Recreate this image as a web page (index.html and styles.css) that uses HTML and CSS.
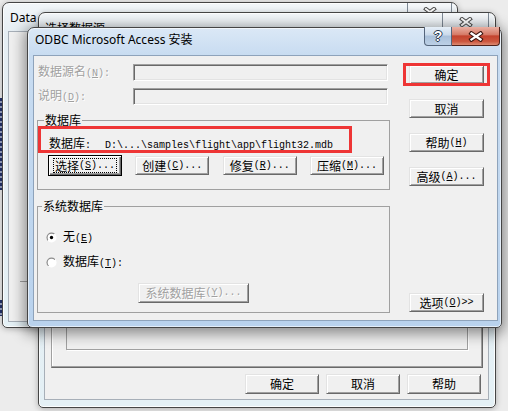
FILE: index.html
```html
<!DOCTYPE html>
<html lang="zh-CN">
<head>
<meta charset="utf-8">
<title>ODBC Microsoft Access 安装</title>
<link rel="stylesheet" href="styles.css">
</head>
<body>
<div class="desktop">
  <div class="strip s1"></div>
  <div class="strip s2"></div>

  <section class="win inactive w1">
    <header class="tb">
      <span class="ttl">Data Connection Wizard</span>
      <div class="caps">
        <span class="cap close"><svg width="14" height="10" viewBox="0 0 14 10"><path d="M3 2 L11 8 M11 2 L3 8" stroke="#4a4a4a" stroke-width="4" stroke-linecap="square"/><path d="M3 2 L11 8 M11 2 L3 8" stroke="#fff" stroke-width="2" stroke-linecap="square"/></svg></span>
      </div>
    </header>
    <div class="client c1"><div class="sep"></div></div>
  </section>

  <section class="win inactive w2">
    <header class="tb">
      <span class="ttl cjk">选择数据源</span>
      <div class="caps">
        <span class="cap close"><svg width="14" height="10" viewBox="0 0 14 10"><path d="M3 2 L11 8 M11 2 L3 8" stroke="#4a4a4a" stroke-width="4" stroke-linecap="square"/><path d="M3 2 L11 8 M11 2 L3 8" stroke="#fff" stroke-width="2" stroke-linecap="square"/></svg></span>
      </div>
    </header>
    <div class="client c2">
      <div class="panel"><div class="well"></div></div>
      <div class="btnrow">
        <button class="btn b2">确定</button>
        <button class="btn b2">取消</button>
        <button class="btn b2">帮助</button>
      </div>
    </div>
  </section>

  <section class="win active w3">
    <header class="tb">
      <span class="ttl">ODBC Microsoft Access 安装</span>
      <div class="caps">
        <span class="cap help"><span class="q">?</span></span>
        <span class="cap red"><svg width="18" height="11" viewBox="0 0 18 11"><path d="M4.5 2.5 L13.5 8.5 M13.5 2.5 L4.5 8.5" stroke="#3b1610" stroke-width="4.4" stroke-linecap="square"/><path d="M4.5 2.5 L13.5 8.5 M13.5 2.5 L4.5 8.5" stroke="#fff" stroke-width="2.3" stroke-linecap="square"/></svg></span>
      </div>
    </header>
    <div class="client c3">
      <div class="main">
        <div class="row">
          <label class="lbl dis">数据源名<span class="m">(<u>N</u>):</span></label>
          <span class="field"></span>
        </div>
        <div class="row r2">
          <label class="lbl dis">说明<span class="m">(<u>D</u>):</span></label>
          <span class="field"></span>
        </div>
        <fieldset class="grp g1">
          <legend>数据库</legend>
          <div class="dbline">数据库<span class="m">:</span><span class="m path">D:\...\samples\flight\app\flight32.mdb</span></div>
          <div class="dbbtns">
            <button class="btn def"><span class="focus">选择<span class="m">(<u>S</u>)...</span></span></button>
            <button class="btn b4">创建<span class="m">(<u>C</u>)...</span></button>
            <button class="btn b4">修复<span class="m">(<u>R</u>)...</span></button>
            <button class="btn b4">压缩<span class="m">(<u>M</u>)...</span></button>
          </div>
        </fieldset>
        <fieldset class="grp g2">
          <legend>系统数据库</legend>
          <div class="radio">
            <svg width="12" height="12" viewBox="0 0 12 12"><defs><linearGradient id="rg" x1="0" y1="0" x2="1" y2="1"><stop offset="0.5" stop-color="#8a8a8a"/><stop offset="0.5" stop-color="#ffffff"/></linearGradient></defs><circle cx="6" cy="6" r="5.5" fill="url(#rg)"/><circle cx="6" cy="6" r="4.2" fill="#fff"/><circle cx="6" cy="6" r="1.8" fill="#000"/></svg>
            <span>无<span class="m">(<u>E</u>)</span></span>
          </div>
          <div class="radio r2">
            <svg width="12" height="12" viewBox="0 0 12 12"><circle cx="6" cy="6" r="5.5" fill="url(#rg)"/><circle cx="6" cy="6" r="4.2" fill="#fff"/></svg>
            <span>数据库<span class="m">(<u>T</u>):</span></span>
          </div>
          <button class="btn sysbtn dis">系统数据库<span class="m">(<u>Y</u>)...</span></button>
        </fieldset>
      </div>
      <div class="side">
        <button class="btn">确定</button>
        <button class="btn">取消</button>
        <button class="btn">帮助<span class="m">(<u>H</u>)</span></button>
        <button class="btn">高级<span class="m">(<u>A</u>)...</span></button>
        <button class="btn opt">选项<span class="m">(<u>O</u>)&gt;&gt;</span></button>
      </div>
      <div class="hl hl1"></div>
      <div class="hl hl2"></div>
    </div>
  </section>
</div>
</body>
</html>
```

FILE: styles.css
```css
* { box-sizing: border-box; margin: 0; padding: 0; }
html, body { width: 508px; height: 411px; overflow: hidden; }
body {
  background: #ececec;
  font-family: "Noto Sans CJK SC", "Noto Sans", sans-serif;
  font-size: 12px;
  line-height: 14px;
  color: #000;
}
.desktop { position: relative; width: 508px; height: 411px; overflow: hidden; }
.m { font-family: "Liberation Mono", "DejaVu Sans Mono", monospace; font-size: 10px; }
u { text-decoration: underline; }

.strip { position: absolute; left: 0; width: 2px; background: repeating-linear-gradient(#24336b 0 3px, #9aa5c4 3px 5px); }
.s1 { top: 98px; height: 92px; }
.s2 { top: 300px; height: 16px; }

/* windows */
.win {
  position: absolute;
  display: flex;
  flex-direction: column;
  border: 1px solid #454545;
  border-radius: 7px 7px 5px 5px;
}
.inactive {
  background: linear-gradient(#f2f6f9, #e6eef3 30px, #e4f0f5);
  box-shadow: 0 1px 6px rgba(0, 0, 0, 0.28), inset 0 0 0 1px rgba(255, 255, 255, 0.85);
}
.w1 { left: 2px; top: 2px; width: 456px; height: 326px; padding: 0 5px 5px 5px; }
.w2 { left: 38px; top: 12px; width: 458px; height: 396px; padding: 0 6px 7px 5px; }
.w3 {
  left: 27px; top: 27px; width: 475px; height: 301px;
  padding: 0 3px 6px 5px;
  background: linear-gradient(#dbe8f6, #c8dcf1 27px, #b9d2ed);
  box-shadow: 0 3px 14px 3px rgba(0, 0, 0, 0.42), inset 0 0 0 1px rgba(255, 255, 255, 0.6);
}

.tb { display: flex; align-items: flex-start; flex: none; }
.w1 .tb, .w2 .tb { height: 28px; }
.w3 .tb { height: 27px; }
.ttl {
  flex: 1;
  font-family: "Noto Sans", "Noto Sans CJK SC", sans-serif;
  font-size: 12px;
  line-height: 14px;
  white-space: nowrap;
  overflow: hidden;
}
.ttl.cjk { font-family: "Noto Sans CJK SC", sans-serif; }
.w1 .ttl { padding: 8px 0 0 2px; }
.w2 .ttl { padding: 8px 0 0 1px; }
.w3 .ttl { padding: 5px 0 0 2px; }

.caps { display: flex; flex: none; }
.cap {
  display: flex; align-items: center; justify-content: center;
  height: 19px;
  border: 1px solid #7d8894;
  border-top: none;
}
.close { background: linear-gradient(#f6f8fa, #e2e8ee); border-radius: 0 0 4px 4px; }
.w1 .close { width: 45px; }
.w2 .close { width: 47px; }
.w3 .caps { margin: -1px -2px 0 0; }
.help {
  width: 28px;
  border-color: #54657c;
  border-radius: 0 0 0 4px;
  background: linear-gradient(#e6eff8, #c9d9ea 45%, #a9c0da 50%, #bcd0e6);
}
.q {
  font-family: "Liberation Sans", sans-serif;
  font-weight: 700;
  font-size: 14px;
  line-height: 14px;
  color: #fff;
  text-shadow: 1px 0 #26364b, -1px 0 #26364b, 0 1px #26364b, 0 -1px #26364b;
}
.red {
  width: 48px;
  border-color: #4f211a;
  border-left: none;
  border-radius: 0 0 4px 0;
  background: linear-gradient(#eab0a3, #d67b68 42%, #c4432e 50%, #cc573f 80%, #dc8a72);
}

/* client areas */
.client { flex: 1; background: #f0f0f0; border: 1px solid #a7afb8; position: relative; }
.w3 .client { border-color: #8ea3bb; }
.c1 .sep { margin: 249px 0 0 11px; border-top: 1px solid #a0a0a0; }

.c2 { display: flex; flex-direction: column; padding: 0 5px 5px 6px; }
.panel {
  flex: 1;
  display: flex;
  flex-direction: column;
  border: 1px solid;
  border-color: #a0a0a0 #696969 #696969 #a0a0a0;
  box-shadow: inset -1px -1px #a0a0a0, inset 1px 1px #fff;
}
.well {
  flex: 1;
  margin: 30px 14px 17px 14px;
  border: 1px solid #a0a0a0;
  box-shadow: 1px 1px 0 #fff;
}
.btnrow { display: flex; justify-content: flex-end; gap: 7px; margin-top: 6px; padding-right: 2px; }

.c3 { display: flex; padding: 8px 0 0 3px; }
.main { width: 353px; flex: none; display: flex; flex-direction: column; }
.row { display: flex; align-items: center; height: 17px; }
.r2 { margin-top: 7px; }
.lbl { width: 96px; padding-left: 1px; line-height: 14px; white-space: nowrap; }
.field {
  width: 255px; height: 17px;
  border: 1px solid;
  border-color: #a0a0a0 #fff #fff #a0a0a0;
  box-shadow: inset 1px 1px #696969, inset -1px -1px #e3e3e3;
  background: #f0f0f0;
}
.dis { color: #a0a0a0; text-shadow: 1px 1px 0 #fff; }

.grp {
  display: block;
  min-inline-size: 0;
  width: 353px;
  border: 1px solid #a0a0a0;
}
.grp legend {
  font-size: 12px;
  line-height: 12px;
  padding: 0 1px;
  margin-left: -4px;
}
.g1 { margin-top: 9px; padding: 11px 5px 13px 10px; }
.g2 { margin-top: 10px; padding: 18px 5px 9px 8px; }
.dbline { line-height: 12px; height: 12px; padding-left: 1px; white-space: nowrap; }
.path { margin-left: 14px; }
.dbbtns { display: flex; justify-content: space-between; align-items: center; height: 21px; margin-top: 6px; }

.radio { display: flex; align-items: center; gap: 6px; height: 14px; }
.radio svg { flex: none; width: 11px; height: 11px; }
.radio.r2 { margin-top: 11px; }

/* buttons */
.btn {
  font: inherit;
  line-height: 12px;
  color: #000;
  background: #f0f0f0;
  border: 1px solid;
  border-color: #e3e3e3 #696969 #696969 #e3e3e3;
  box-shadow: inset 1px 1px #fff, inset -1px -1px #a0a0a0;
  width: 75px;
  height: 19px;
  padding: 0;
  display: flex;
  align-items: center;
  justify-content: center;
  white-space: nowrap;
}
.btn.dis { color: #a0a0a0; }
.b2 { width: 74px; height: 20px; }
.b4 { width: 74px; }
.def {
  width: 74px;
  height: 21px;
  border-color: #000;
  box-shadow: inset 1px 1px #fff, inset -1px -1px #696969, inset -2px -2px #a0a0a0;
  padding: 2px 4px;
}
.focus {
  display: flex; align-items: center; justify-content: center;
  width: 100%; height: 100%;
  border: 1px dotted #000;
}
.sysbtn { width: 111px; height: 20px; margin: 14px 0 0 92px; }

.side { flex: none; margin-left: 19px; display: flex; flex-direction: column; gap: 15px; padding: 1px 0 8px; }
.opt { margin-top: auto; }

/* red annotation boxes */
.hl { position: absolute; border: 3px solid #ee3535; }
.hl1 { left: 369px; top: 7px; width: 87px; height: 23px; }
.hl2 { left: 4px; top: 70px; width: 314px; height: 27px; }
```
